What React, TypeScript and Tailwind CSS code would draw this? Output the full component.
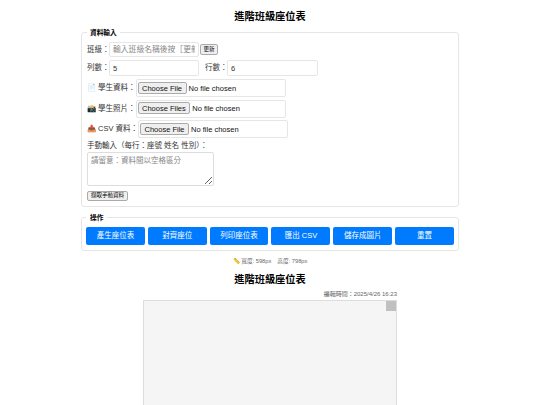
const textFont = "font-['Liberation_Sans','Noto_Sans_CJK_TC',sans-serif]";

function FileRow({ icon, label, multiple }: { icon: string; label: string; multiple?: boolean }) {
  return (
    <div className="flex items-center h-[18px] mb-[2.5px]">
      <span className="text-[7.5px] text-[#333] whitespace-nowrap flex items-center">
        <span className="w-[11px]">{icon}</span>{label}：
      </span>
      <div className="w-[150px] h-[18px] border border-[#e6e6e6] rounded-[2px] flex items-center pl-[1px] overflow-hidden">
        <input type="file" multiple={multiple} className="text-[7.5px] text-[#111] w-[146px] file:text-[7.5px] file:mr-[2px] file:px-[3.5px] file:py-0 file:h-[12px] file:border file:border-[#aaa] file:rounded-[2px] file:bg-[#efefef]" />
      </div>
    </div>
  );
}

function ActionButton({ children }: { children: React.ReactNode }) {
  return (
    <button className="flex-1 h-[18px] bg-[#007bff] text-white text-[7.5px] rounded-[2px] flex items-center justify-center">
      {children}
    </button>
  );
}

export default function App() {
  return (
    <main className={`${textFont} bg-white w-[540px] h-[405px] overflow-hidden flex flex-col items-center`}>
      <h1 className="shrink-0 text-[10.2px] font-bold text-black mt-[10px] leading-[14px]">進階班級座位表</h1>

      <fieldset className="shrink-0 w-[378px] h-[179px] mt-[4px] border border-[#e6e6e6] rounded-[3px] px-[5px]">
        <legend className="text-[6.7px] font-bold text-black px-[3px] leading-[9px]">資料輸入</legend>

        <div className="flex items-center h-[15px] mt-[5px] mb-[3px]">
          <span className="text-[7.5px] text-[#333] w-[22px] whitespace-nowrap">班級：</span>
          <input placeholder="輸入班級名稱後按［更新］" className="w-[90px] h-[15px] border border-[#e6e6e6] rounded-[2px] px-[3px] text-[7.8px] placeholder:text-[#888] outline-none" />
          <button className="ml-[1px] w-[18px] h-[11px] bg-[#efefef] border border-[#aaa] rounded-[2px] text-[5.5px] text-black flex items-center justify-center">更新</button>
        </div>

        <div className="flex items-center h-[16px] mb-[3px]">
          <span className="text-[7.5px] text-[#333] w-[22px] whitespace-nowrap">列數：</span>
          <input readOnly value="5" className="w-[90px] h-[16px] border border-[#e6e6e6] rounded-[2px] px-[3px] text-[7.5px] text-[#333] outline-none" />
          <span className="text-[7.5px] text-[#333] ml-[6px] w-[22px] whitespace-nowrap">行數：</span>
          <input readOnly value="6" className="w-[91px] h-[16px] border border-[#e6e6e6] rounded-[2px] px-[3px] text-[7.5px] text-[#333] outline-none" />
        </div>

        <FileRow icon="📄" label="學生資料" />
        <FileRow icon="📸" label="學生照片" multiple />
        <FileRow icon="📤" label="CSV 資料" />

        <div className="text-[7.5px] text-[#333] mt-[0.5px] leading-[10px]">手動輸入（每行：座號 姓名 性別）：</div>
        <textarea placeholder="請留意：資料間以空格區分" className="block w-[127px] h-[34px] mt-[1px] border border-[#ddd] rounded-[2px] px-[3px] py-[2px] text-[7.5px] leading-[11px] placeholder:text-[#888] outline-none" />
        <button className="mt-[5px] w-[41px] h-[10px] bg-[#efefef] border border-[#aaa] rounded-[2px] text-[5.5px] text-black flex items-center justify-center">擷取手動資料</button>
      </fieldset>

      <fieldset className="shrink-0 w-[378px] h-[38px] mt-[6px] border border-[#e6e6e6] rounded-[3px] px-[4px]">
        <legend className="text-[6.7px] font-bold text-black px-[4px] leading-[9px]">操作</legend>
        <div className="flex gap-[3px] mt-[5px]">
          <ActionButton>產生座位表</ActionButton>
          <ActionButton>對齊座位</ActionButton>
          <ActionButton>列印座位表</ActionButton>
          <ActionButton>匯出 CSV</ActionButton>
          <ActionButton>儲存成圖片</ActionButton>
          <ActionButton>重置</ActionButton>
        </div>
      </fieldset>

      <div className="shrink-0 mt-[6px] text-[5.7px] text-[#666] leading-[8px] flex gap-[6px]">
        <span>📏 寬度: 598px</span>
        <span>高度: 798px</span>
      </div>

      <h2 className="shrink-0 text-[10.2px] font-bold text-black mt-[8px] leading-[14px]">進階班級座位表</h2>

      <div className="shrink-0 w-[254px] mt-[3px] text-[6px] text-[#666] text-right leading-[8px]">編輯時間：2025/4/26 16:23</div>

      <div className="shrink-0 w-[254px] h-[200px] mt-[2px] bg-[#f5f5f5] border border-[#ddd] flex justify-end items-start">
        <div className="w-[10px] h-[10px] bg-[#c0c0c0]" />
      </div>
    </main>
  );
}
